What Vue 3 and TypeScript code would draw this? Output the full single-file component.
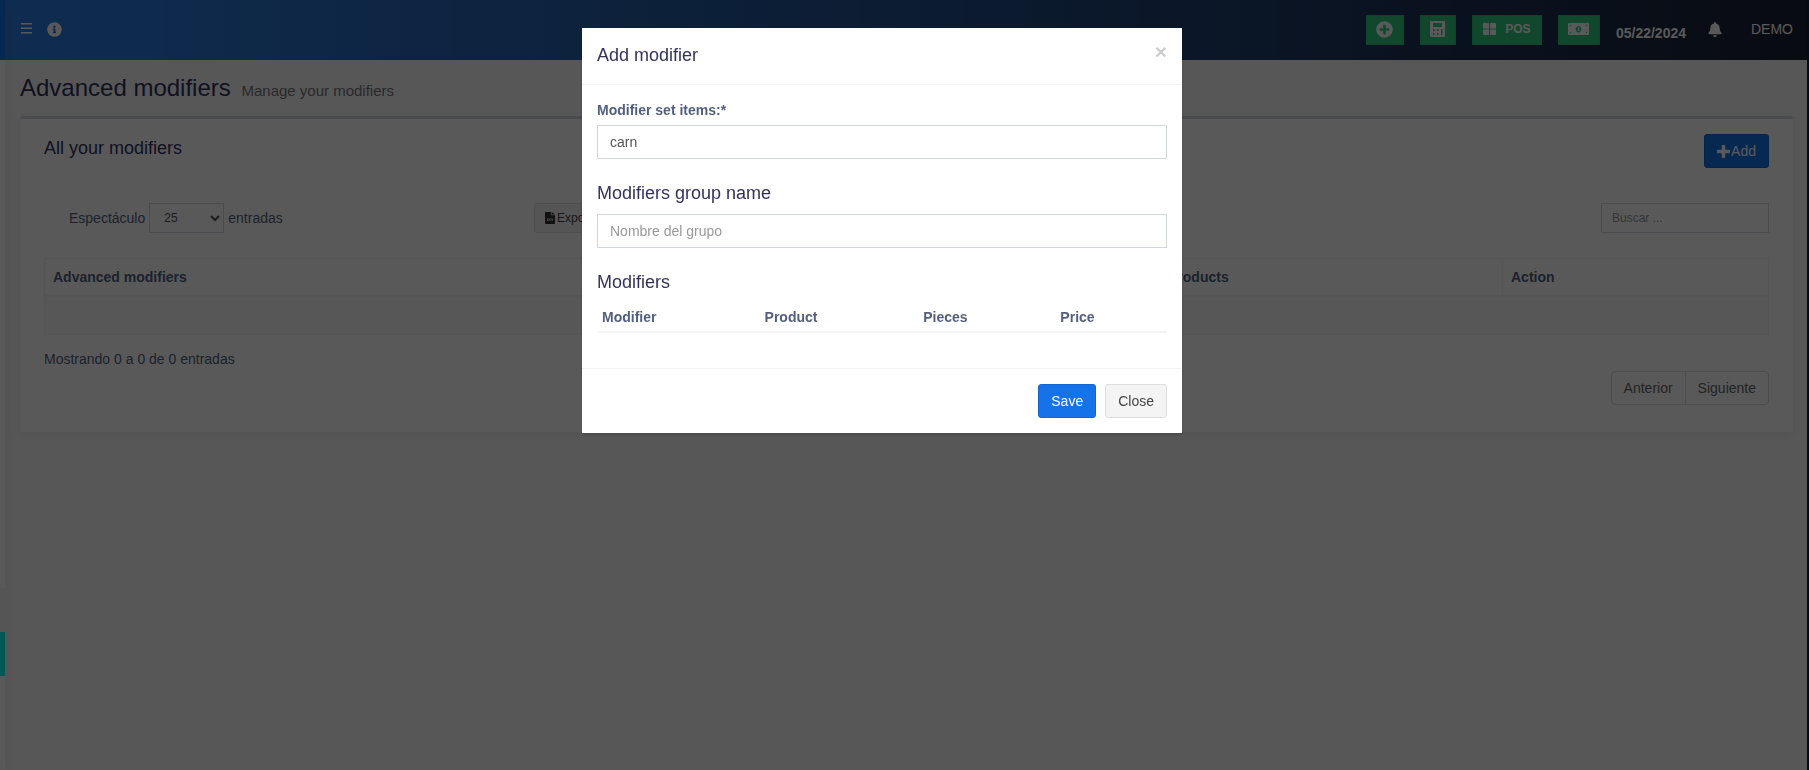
<script setup lang="ts">
import { ref } from 'vue'

const pageSize = ref('25')
const setItems = ref('carn')
const groupName = ref('')
const search = ref('')
const modifierColumns = ['Modifier', 'Product', 'Pieces', 'Price']
</script>

<template>
  <div class="shell">
    <aside class="sidebar">
      <div class="side-brand"></div>
      <div class="side-top"></div>
      <div class="side-item"></div>
      <div class="side-active"></div>
    </aside>

    <div class="page">
      <header class="topbar">
        <nav class="top-left">
          <button class="bare" aria-label="Menu">
            <svg width="11" height="12" viewBox="0 0 11 12"><path d="M0 1h11v1.500H0zM0 5.500h11V7H0zM0 10h11v1.500H0z" /></svg>
          </button>
          <button class="bare" aria-label="Info">
            <svg width="15" height="15" viewBox="0 0 512 512"><path d="M256 8C119 8 8 119 8 256c0 137 111 248 248 248s248-111 248-248C504 119 393 8 256 8zm0 110c23 0 42 19 42 42s-19 42-42 42-42-19-42-42 19-42 42-42zm56 254c0 7-5 12-12 12h-88c-7 0-12-5-12-12v-24c0-7 5-12 12-12h12v-64h-12c-7 0-12-5-12-12v-24c0-7 5-12 12-12h64c7 0 12 5 12 12v100h12c7 0 12 5 12 12v24z" /></svg>
          </button>
        </nav>
        <nav class="top-right">
          <button class="green w38" aria-label="New">
            <svg width="17" height="17" viewBox="0 0 512 512"><path d="M256 8C119 8 8 119 8 256s111 248 248 248 248-111 248-248S393 8 256 8zm144 276c0 6.600-5.400 12-12 12h-92v92c0 6.600-5.400 12-12 12h-56c-6.600 0-12-5.400-12-12v-92h-92c-6.600 0-12-5.400-12-12v-56c0-6.600 5.400-12 12-12h92v-92c0-6.600 5.400-12 12-12h56c6.600 0 12 5.400 12 12v92h92c6.600 0 12 5.400 12 12v56z" /></svg>
          </button>
          <button class="green w36" aria-label="Calculator">
            <svg width="15" height="17" viewBox="0 0 15 17"><path fill-rule="evenodd" d="M1 0h13a1 1 0 0 1 1 1v14a1 1 0 0 1-1 1H1a1 1 0 0 1-1-1V1a1 1 0 0 1 1-1zM3 2v4h9V2zM3 8v2h1.500V8zM7 8v2h1.500V8zM11 8v6h1.500V8zM3 12v2h1.500v-2zM7 12v2h1.500v-2z" /></svg>
          </button>
          <button class="green pos">
            <svg width="13" height="12" viewBox="0 0 13 12"><path d="M1 0h5v5.500H0V1a1 1 0 0 1 1-1zM7 0h5a1 1 0 0 1 1 1v4.500H7zM0 6.500h6V12H1a1 1 0 0 1-1-1zM7 6.500h6V11a1 1 0 0 1-1 1H7z" /></svg>
            POS
          </button>
          <button class="green w42" aria-label="Cash">
            <svg width="21" height="13" viewBox="0 0 21 13"><path fill-rule="evenodd" d="M1 0h19a1 1 0 0 1 1 1v10a1 1 0 0 1-1 1H1a1 1 0 0 1-1-1V1a1 1 0 0 1 1-1zM10.500 3a2.800 3.200 0 1 0 .01 0zM2 2v1h1V2zM18 2v1h1V2zM2 9v1h1V9zM18 9v1h1V9z" /><path d="M9.700 4.300h1.400v3h.5v.8H9.500v-.8h.6V5.100h-.4z" /></svg>
          </button>
          <strong class="date">05/22/2024</strong>
          <button class="bare bell" aria-label="Notifications">
            <svg width="14" height="15" viewBox="0 0 448 512"><path d="M224 512c35 0 64-29 64-64H160c0 35 29 64 64 64zm215-150c-19-21-55-52-55-154 0-78-54-140-128-155V32c0-18-14-32-32-32s-32 14-32 32v21C119 68 64 130 64 208c0 102-36 133-55 154-6 7-9 15-9 22 0 16 13 32 32 32h384c19 0 32-16 32-32 0-7-3-15-9-22z" /></svg>
          </button>
          <a class="user" href="#">DEMO</a>
        </nav>
      </header>

      <main class="content">
        <h1>Advanced modifiers <small>Manage your modifiers</small></h1>
        <section class="box">
          <div class="box-head">
            <h3>All your modifiers</h3>
            <button class="btn primary add">
              <svg width="13" height="13" viewBox="0 0 13 13"><path d="M5.500 0h2a.7.7 0 0 1 .7.7v4.100h4.100a.7.7 0 0 1 .7.700v2a.7.7 0 0 1-.7.700H8.200v4.100a.7.7 0 0 1-.7.7h-2a.7.7 0 0 1-.7-.7V8.200H.7a.7.7 0 0 1-.7-.7v-2a.7.7 0 0 1 .7-.7h4.100V.7a.7.7 0 0 1 .7-.7z" /></svg>
              Add
            </button>
          </div>

          <div class="tools">
            <label class="length">
              Espectáculo
              <select v-model="pageSize"><option>25</option><option>50</option><option>100</option></select>
              entradas
            </label>
            <button class="export">
              <svg width="10" height="12" viewBox="0 0 10 12"><path fill-rule="evenodd" d="M.7 0H6v3.300h4v8a.7.7 0 0 1-.7.7H.7a.7.7 0 0 1-.7-.7V.7A.7.7 0 0 1 .7 0zM6.700 0 10 2.600H6.700zM2 6.500v2.500h1.500v-.7H2.700V7.200h.8v-.7zM4.200 6.500v1.500h.8v.4h-.8v.6h1.500V7.500H5v-.4h.7v-.6zM6.300 6.500l.7 2.500h.5l.8-2.500h-.6l-.4 1.400-.4-1.400z" /></svg>
              Exportar
            </button>
            <input v-model="search" class="search" type="search" placeholder="Buscar ..." aria-label="Buscar" />
          </div>

          <table class="grid">
            <thead>
              <tr>
                <th class="c-name">Advanced modifiers</th>
                <th class="c-products">Products</th>
                <th class="c-action">Action</th>
              </tr>
            </thead>
            <tbody>
              <tr><td colspan="3"></td></tr>
            </tbody>
          </table>

          <p class="info">Mostrando 0 a 0 de 0 entradas</p>
          <div class="pager">
            <button>Anterior</button><button>Siguiente</button>
          </div>
        </section>
      </main>
    </div>

    <div class="edge"></div>

    <div class="overlay">
      <form class="modal" role="dialog" aria-labelledby="modal-title" @submit.prevent>
        <div class="modal-head">
          <h4 id="modal-title">Add modifier</h4>
          <button type="button" class="close" aria-label="Close dialog">×</button>
        </div>
        <div class="modal-body">
          <label for="set-items">Modifier set items:*</label>
          <input id="set-items" v-model="setItems" type="text" />
          <h4 id="group-title">Modifiers group name</h4>
          <input v-model="groupName" type="text" placeholder="Nombre del grupo" aria-labelledby="group-title" />
          <h4>Modifiers</h4>
          <table class="mods">
            <thead>
              <tr><th v-for="name in modifierColumns" :key="name">{{ name }}</th></tr>
            </thead>
          </table>
        </div>
        <div class="modal-foot">
          <button type="submit" class="btn primary">Save</button>
          <button type="button" class="btn plain">Close</button>
        </div>
      </form>
    </div>
  </div>
</template>

<style>
body {
  margin: 0;
}
</style>

<style scoped>
* {
  box-sizing: border-box;
}
.shell {
  display: flex;
  min-height: 100vh;
  background: #f9f9fc;
  color: #525f7f;
  font: 14px/20px "Liberation Sans", Arial, sans-serif;
}
button,
input,
select {
  font: inherit;
}
button {
  margin: 0;
  padding: 0;
  cursor: pointer;
}
svg {
  display: block;
  fill: currentColor;
  flex: none;
}
h1,
h3,
h4,
p {
  margin: 0;
  font-weight: 400;
}

.sidebar {
  width: 5px;
  flex: none;
  display: flex;
  flex-direction: column;
  background: #ffffff;
  box-shadow: 2px 0 12px rgba(69, 65, 78, 0.1);
  z-index: 1;
}
.side-brand {
  height: 60px;
  background: #1572e8;
}
.side-top {
  height: 528px;
}
.side-item {
  height: 44px;
  background: #f4f4f4;
}
.side-active {
  height: 44px;
  background: #00fff8;
}
.edge {
  width: 2px;
  flex: none;
  background: #0e1a38;
}
.page {
  flex: 1;
  min-width: 0;
}

.topbar {
  height: 60px;
  padding: 0 14px 0 16px;
  display: flex;
  justify-content: space-between;
  background: linear-gradient(90deg, #2b80e8 0%, #1a2035 100%);
  color: #ffffff;
}
.top-left,
.top-right {
  display: flex;
}
.top-left {
  gap: 15px;
  padding-top: 22px;
  align-items: flex-start;
}
.top-right {
  gap: 16px;
  padding-top: 15px;
}
.bare {
  border: 0;
  background: none;
  color: inherit;
}
.green {
  height: 30px;
  display: flex;
  align-items: center;
  justify-content: center;
  border: 1px solid #2ac47f;
  background: #31ce82;
  color: #ffffff;
  font-size: 12px;
  font-weight: 700;
  padding-bottom: 2px;
}
.w36 {
  width: 36px;
}
.w38 {
  width: 38px;
}
.w42 {
  width: 42px;
}
.pos {
  width: 70px;
  gap: 9px;
}
.date {
  padding-top: 8px;
}
.bell {
  height: 29px;
  margin: 0 13px 0 6px;
}
.user {
  color: inherit;
  text-decoration: none;
  padding-top: 4px;
}

.content {
  padding: 15px 14px 15px 15px;
}
h1 {
  font-size: 24px;
  line-height: 26px;
  margin-bottom: 15px;
  color: #32325d;
}
h1 small {
  font-size: 15px;
  line-height: 15px;
  padding-left: 4px;
  color: #777777;
}
.box {
  background: #ffffff;
  border-top: 3px solid #d2d6de;
  border-radius: 3px;
  padding: 15px 24px 27px;
  box-shadow: 0 2px 8px rgba(69, 65, 78, 0.08);
}
.box-head {
  display: flex;
  justify-content: space-between;
}
h3 {
  font-size: 18px;
  padding-top: 4px;
  color: #32325d;
}
.btn {
  height: 34px;
  padding: 0 12px;
  border: 1px solid #dddddd;
  border-radius: 3px;
}
.primary {
  background: #1572e8;
  border-color: #1266d2;
  color: #ffffff;
}
.plain {
  background: #f4f4f4;
  color: #444444;
}
.add {
  display: flex;
  align-items: center;
  gap: 1px;
}
.tools {
  display: flex;
  align-items: center;
  margin: 35px 0 25px;
}
.length {
  width: 490px;
  padding-left: 25px;
  display: flex;
  align-items: center;
  gap: 4px;
}
.tools select {
  width: 75px;
  height: 30px;
  padding: 0 0 0 10px;
  border: 1px solid #d2d6de;
  border-radius: 0;
  background: #ffffff;
  color: #555555;
  font-size: 12px;
}
.export {
  height: 30px;
  padding: 0 10px;
  display: flex;
  align-items: center;
  gap: 2px;
  border: 1px solid #dddddd;
  border-radius: 3px;
  background: #f4f4f4;
  color: #444444;
  font-size: 12px;
}
.export svg {
  color: #333333;
}
.search {
  width: 168px;
  height: 30px;
  margin-left: auto;
  padding: 0 10px;
  border: 1px solid #d2d6de;
  background: #ffffff;
  font-size: 12px;
}
::placeholder {
  color: #999999;
  opacity: 1;
}
.grid {
  width: 100%;
  border-collapse: separate;
  border-spacing: 0;
  border: 1px solid #f4f4f4;
  table-layout: fixed;
}
.grid th {
  height: 38px;
  padding: 0 8px;
  text-align: left;
  border-bottom: 2px solid #f4f4f4;
}
.grid th + th {
  border-left: 1px solid #f4f4f4;
}
.grid .c-products {
  width: 343px;
}
.grid .c-action {
  width: 266px;
}
.grid td {
  height: 37px;
  padding: 0;
  background: #f9f9f9;
}
.info {
  margin-top: 14px;
}
.pager {
  display: flex;
  justify-content: flex-end;
  margin-top: 2px;
}
.pager button {
  height: 34px;
  padding: 0 12px;
  border: 1px solid #dddddd;
  border-radius: 4px 0 0 4px;
  background: #ffffff;
  color: #666666;
}
.pager button + button {
  margin-left: -1px;
  border-radius: 0 4px 4px 0;
}

.overlay {
  position: fixed;
  inset: 0;
  z-index: 5;
  display: flex;
  justify-content: center;
  align-items: flex-start;
  padding: 28px 45px 28px 0;
  background: rgba(0, 0, 0, 0.65);
}
.modal {
  width: 600px;
  background: #ffffff;
  box-shadow: 0 2px 3px rgba(0, 0, 0, 0.125);
}
.modal-head {
  display: flex;
  justify-content: space-between;
  align-items: flex-start;
  padding: 15px 15px 16px;
  border-bottom: 1px solid #f4f4f4;
}
h4 {
  font-size: 18px;
  line-height: 21px;
  color: #32325d;
}
.modal-head h4 {
  line-height: 25px;
}
.close {
  border: 0;
  background: none;
  color: #000000;
  opacity: 0.2;
  font-size: 21px;
  font-weight: 700;
  line-height: 17px;
}
.modal-body {
  padding: 15px 15px 35px;
}
.modal-body h4 {
  margin: 24px 0 10px;
}
.modal-body label {
  display: block;
  margin-bottom: 5px;
  font-weight: 700;
}
.modal-body input {
  display: block;
  width: 100%;
  height: 34px;
  padding: 0 12px;
  border: 1px solid #d2d6de;
  color: #555555;
}
.mods {
  width: 100%;
  border-collapse: separate;
  border-spacing: 0;
}
.mods th {
  padding: 4px 5px;
  text-align: left;
  border-bottom: 2px solid #f4f4f4;
}
.modal-foot {
  display: flex;
  justify-content: flex-end;
  gap: 9px;
  padding: 15px;
  border-top: 1px solid #f4f4f4;
}
</style>
